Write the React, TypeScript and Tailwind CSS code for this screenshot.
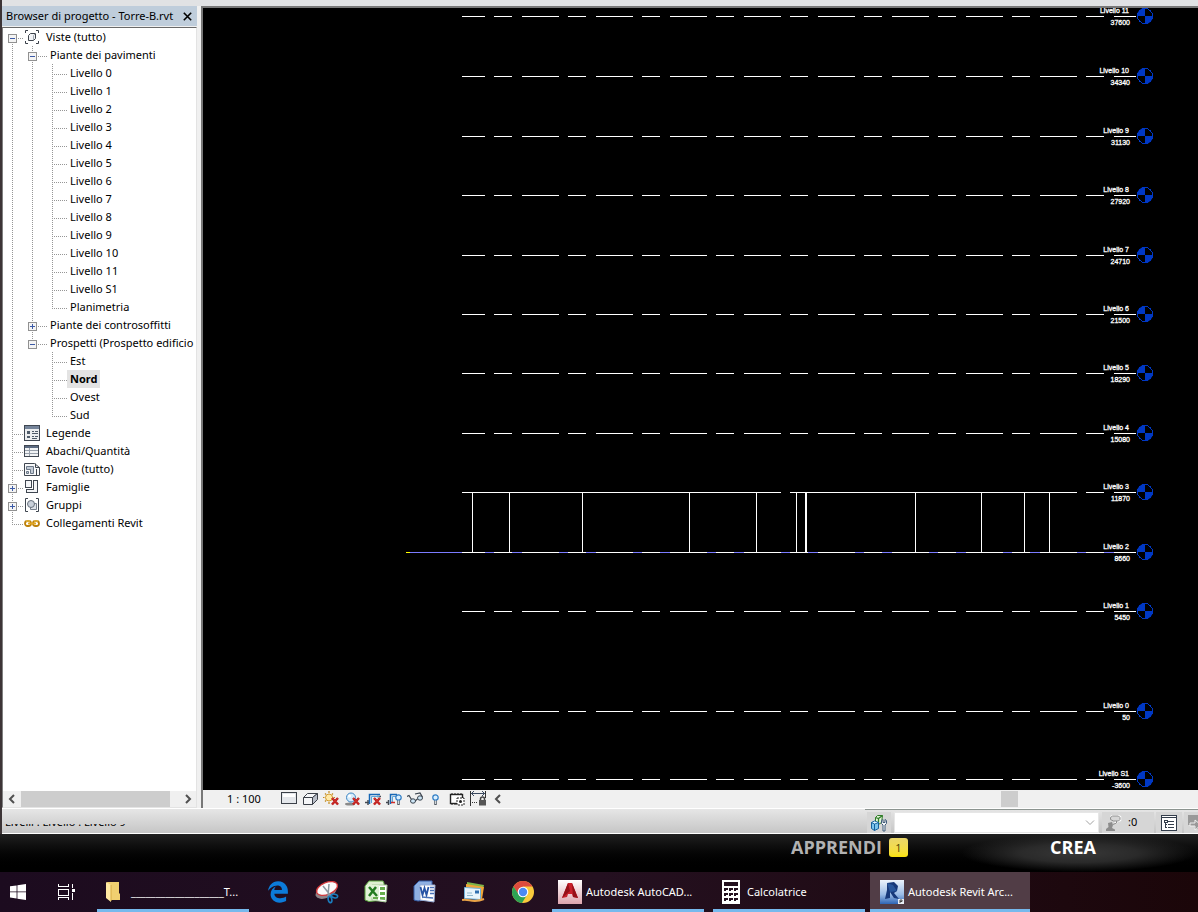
import type { ReactNode } from "react";
import { FaEdgeLegacy } from "react-icons/fa";

type GuideKind = "blank" | "line" | "tee" | "end" | "first" | "open" | "closed";

type TreeRowData = {
  label: string;
  guides: GuideKind[];
  icon?: ReactNode;
  selected?: boolean;
};

const leaf = (label: string, guides: GuideKind[], selected = false): TreeRowData => ({
  label,
  guides,
  selected,
});

const ROWS: TreeRowData[] = [
  { label: "Viste (tutto)", guides: ["first"], icon: <ViewsIcon /> },
  { label: "Piante dei pavimenti", guides: ["line", "open"] },
  leaf("Livello 0", ["line", "line", "tee"]),
  leaf("Livello 1", ["line", "line", "tee"]),
  leaf("Livello 2", ["line", "line", "tee"]),
  leaf("Livello 3", ["line", "line", "tee"]),
  leaf("Livello 4", ["line", "line", "tee"]),
  leaf("Livello 5", ["line", "line", "tee"]),
  leaf("Livello 6", ["line", "line", "tee"]),
  leaf("Livello 7", ["line", "line", "tee"]),
  leaf("Livello 8", ["line", "line", "tee"]),
  leaf("Livello 9", ["line", "line", "tee"]),
  leaf("Livello 10", ["line", "line", "tee"]),
  leaf("Livello 11", ["line", "line", "tee"]),
  leaf("Livello S1", ["line", "line", "tee"]),
  leaf("Planimetria", ["line", "line", "end"]),
  { label: "Piante dei controsoffitti", guides: ["line", "closed"] },
  { label: "Prospetti (Prospetto edificio", guides: ["line", "first"] },
  leaf("Est", ["line", "blank", "tee"]),
  leaf("Nord", ["line", "blank", "tee"], true),
  leaf("Ovest", ["line", "blank", "tee"]),
  leaf("Sud", ["line", "blank", "end"]),
  { label: "Legende", guides: ["tee"], icon: <LegendIcon /> },
  { label: "Abachi/Quantità", guides: ["tee"], icon: <ScheduleIcon /> },
  { label: "Tavole (tutto)", guides: ["tee"], icon: <SheetIcon /> },
  { label: "Famiglie", guides: ["closed"], icon: <FamilyIcon /> },
  { label: "Gruppi", guides: ["closed"], icon: <GroupIcon /> },
  { label: "Collegamenti Revit", guides: ["end"], icon: <LinkIcon /> },
];

const LEVELS = [
  { name: "Livello 11", value: "37600", y: 8 },
  { name: "Livello 10", value: "34340", y: 68 },
  { name: "Livello 9", value: "31130", y: 128 },
  { name: "Livello 8", value: "27920", y: 187 },
  { name: "Livello 7", value: "24710", y: 247 },
  { name: "Livello 6", value: "21500", y: 306 },
  { name: "Livello 5", value: "18290", y: 365 },
  { name: "Livello 4", value: "15080", y: 425 },
  { name: "Livello 3", value: "11870", y: 484 },
  { name: "Livello 2", value: "8660", y: 544 },
  { name: "Livello 1", value: "5450", y: 603 },
  { name: "Livello 0", value: "50", y: 703 },
  { name: "Livello S1", value: "-3600", y: 771 },
];

const WALLS = [269, 306, 379, 486, 553, 593, 712, 778, 821, 846];

export default function App() {
  return (
    <div className="w-full overflow-hidden bg-black font-['Noto_Sans','Open_Sans',sans-serif] text-[11px] text-black">
      <div className="border-l-2 border-[#3c3436] bg-[#f0f0f0]">
        <div className="h-1.5 bg-[#e1e2e4]" />
        <div className="flex">
          <ProjectBrowser />
          <main className="ml-1 flex min-w-0 flex-1 flex-col">
            <LevelCanvas />
            <ViewControlBar />
          </main>
        </div>
        <StatusBar />
      </div>
      <Banner />
      <Taskbar />
    </div>
  );
}

function ProjectBrowser() {
  return (
    <aside className="flex w-[195px] shrink-0 flex-col">
      <header className="flex h-5 items-center justify-between bg-[#bfcddb] pl-1">
        <h2 className="whitespace-nowrap">Browser di progetto - Torre-B.rvt</h2>
        <button aria-label="Chiudi" className="flex h-5 w-5 items-center justify-center">
          <svg width="9" height="9" viewBox="0 0 9 9" stroke="#000" strokeWidth="1.6">
            <path d="M.8.8l7.4 7.4M8.2.8L.8 8.2" />
          </svg>
        </button>
      </header>
      <div className="mt-px flex flex-1 flex-col border border-[#e3e3e3] border-t-[#696969] border-l-[#808080] bg-white">
        <ul className="flex-1 overflow-hidden pl-px">
          {ROWS.map((row) => (
            <TreeRow key={row.label} row={row} />
          ))}
        </ul>
        <div className="flex h-4 bg-[#f0f0f0]">
          <button aria-label="Scorri a sinistra" className="flex w-[18px] items-center justify-center">
            <Chevron d="M6 1L2 5l4 4" />
          </button>
          <div className="w-[149px] bg-[#cdcdcd]" />
          <button aria-label="Scorri a destra" className="ml-auto flex w-[17px] items-center justify-center">
            <Chevron d="M2 1l4 4-4 4" />
          </button>
        </div>
      </div>
    </aside>
  );
}

function Chevron({ d }: { d: string }) {
  return (
    <svg width="8" height="10" viewBox="0 0 8 10" fill="none" stroke="#505050" strokeWidth="2">
      <path d={d} />
    </svg>
  );
}

function TreeRow({ row }: { row: TreeRowData }) {
  return (
    <li className="flex h-[18px] items-center whitespace-nowrap">
      {row.guides.map((kind, i) => (
        <Guide key={i} kind={kind} column={i} label={row.label} />
      ))}
      {row.icon && <span className="ml-0.5 h-4 w-4 shrink-0">{row.icon}</span>}
      {row.selected ? (
        <span className="ml-[5px] h-[18px] bg-[#e3e3e3] px-[3px] leading-[18px] font-bold">{row.label}</span>
      ) : (
        <span className={row.icon ? "pl-1.5 leading-[18px]" : "pl-2 leading-[18px]"}>{row.label}</span>
      )}
    </li>
  );
}

function Guide({ kind, column, label }: { kind: GuideKind; column: number; label: string }) {
  const isToggle = kind === "first" || kind === "open" || kind === "closed";
  const reach = column === 0 ? 22 : 25;
  // "first" opens a branch whose own line ends or starts at the box
  const top = kind === "first" && column === 0 ? 10 : 0;
  const bottom = kind === "end" || (kind === "first" && column > 0) ? 11 : 18;

  const drawing = (
    <svg
      width={column === 0 ? 18 : 20}
      height="18"
      viewBox={column === 0 ? "2 0 18 18" : "0 0 20 18"}
      className="block overflow-visible"
      shapeRendering="crispEdges"
      fill="none"
    >
      {kind !== "blank" && <path d={`M10.5 ${top}V${bottom}`} stroke="#969696" strokeDasharray="1 1" />}
      {kind !== "blank" && kind !== "line" && (
        <path d={`M12 10.5H${reach}`} stroke="#969696" strokeDasharray="1 1" />
      )}
      {isToggle && (
        <>
          <rect x="6.5" y="6.5" width="8" height="8" fill="#f4f4f4" stroke="#919191" />
          <path d="M8 10.5h5" stroke="#3c5aa6" />
          {kind === "closed" && <path d="M10.5 8v5" stroke="#3c5aa6" />}
        </>
      )}
    </svg>
  );

  if (isToggle) {
    return (
      <button aria-label={label} aria-expanded={kind !== "closed"} className="shrink-0">
        {drawing}
      </button>
    );
  }
  return <span className="shrink-0">{drawing}</span>;
}

function LevelCanvas() {
  return (
    <div className="border-t-2 border-l-2 border-t-[#787878] border-l-[#787878] bg-black">
      <svg
        className="block h-[782px] w-full font-['Liberation_Sans',Arial,sans-serif] text-[7px]"
        fill="#fff"
      >
        <g shapeRendering="crispEdges">
          <path d="M207 544.5H911" stroke="#7b7bff" />
          <path d="M203 544.5h4" stroke="#ff0" />
          {LEVELS.map((level) => (
            <path
              key={level.name}
              d={`M259 ${level.y + 0.5}H933`}
              stroke="#fff"
              strokeDasharray="37 9 18 10"
              strokeDashoffset="14"
            />
          ))}
          <path d="M259 484.5H578M587 484.5H874" stroke="#fff" />
          {WALLS.map((x) => (
            <path key={x} d={`M${x + 0.5} 484V544`} stroke="#fff" />
          ))}
          <path d="M603 484V544" stroke="#fff" strokeWidth="2" />
        </g>
        {LEVELS.map((level) => (
          <g key={level.name}>
            <text x="926" y={level.y - 3} textAnchor="end" stroke="#fff" strokeWidth=".3">
              {level.name}
            </text>
            <text x="927" y={level.y + 9} textAnchor="end" stroke="#fff" strokeWidth=".3">
              {level.value}
            </text>
            <g transform={`translate(942 ${level.y})`}>
              <circle r="7.5" fill="none" stroke="#0038c4" shapeRendering="crispEdges" />
              <path d="M0 0V-8A8 8 0 0 0-8 0ZM0 0V8A8 8 0 0 0 8 0Z" fill="#0038c4" />
            </g>
          </g>
        ))}
      </svg>
    </div>
  );
}

function ViewControlBar() {
  return (
    <div className="flex h-[18px] items-center border-l-2 border-[#787878] bg-[#f0f0f0]">
      <button className="ml-6 w-[51px] text-left whitespace-nowrap">1 : 100</button>
      <div className="ml-[3px] flex items-center gap-[5px]">
        <ToolButton label="Livello di dettaglio">
          <rect x=".5" y="1.5" width="15" height="11" fill="#e4e7eb" stroke="#3b4048" />
          <path d="M2 3h12v3H2z" fill="#fff" />
        </ToolButton>
        <ToolButton label="Stile di visualizzazione">
          <path d="M1.500 6.500h9v7h-9zM1.500 6.500l4-4h10l-5 4" fill="#f5f6f8" stroke="#3b4048" strokeLinejoin="round" />
          <path d="M10.500 6.500l5-4v6l-5 5z" fill="#b9bec8" stroke="#3b4048" strokeLinejoin="round" />
        </ToolButton>
        <ToolButton label="Percorso del sole">
          <path d="M6 0v2M6 11v2M0 6.500h1.500M2 2.500l1 1M10 2.500l-1 1M2 10.500l1-1M10.500 6.500H12" stroke="#c28a1e" strokeWidth="1.200" />
          <circle cx="6" cy="6.500" r="3.500" fill="#ffe9a8" stroke="#d19a2c" />
          <RedCross />
        </ToolButton>
        <ToolButton label="Ombre">
          <ellipse cx="6" cy="13" rx="5" ry="1.500" fill="#8a8a8a" />
          <circle cx="7" cy="6.500" r="4.500" fill="#d6ecfb" stroke="#3f86c4" />
          <circle cx="5.500" cy="5" r="1.500" fill="#fff" />
          <RedCross />
        </ToolButton>
        <ToolButton label="Ritaglia vista">
          <path d="M0 11.500h4M12 5.500h4M3 9v5" stroke="#454a52" strokeWidth="1.500" />
          <path d="M4.500 13V3.500H15" stroke="#1767b5" strokeWidth="1.500" />
          <path d="M6.500 12V5.500h8" stroke="#5ea7dc" />
          <RedCross />
        </ToolButton>
        <ToolButton label="Mostra area di ritaglio">
          <path d="M0 11.500h3M2.500 9v5" stroke="#454a52" strokeWidth="1.500" />
          <path d="M4.500 13V3.500H11" stroke="#1767b5" strokeWidth="1.500" />
          <path d="M6.500 12V5.500H10" stroke="#5ea7dc" />
          <path d="M5 11.500h4" stroke="#d32c28" strokeWidth="1.500" />
          <Bulb x={9} />
        </ToolButton>
        <ToolButton label="Nascondi/isola temporaneamente">
          <path d="M0 5.500l2-1 2.500 4M8 3l5-1 2.500 4M8 10l2.500-2" stroke="#39424d" strokeWidth="1.200" />
          <ellipse cx="6" cy="10" rx="2.500" ry="2.200" fill="#cde6f6" stroke="#39424d" />
          <ellipse cx="13" cy="7" rx="2.500" ry="2.200" fill="#cde6f6" stroke="#39424d" />
        </ToolButton>
        <ToolButton label="Mostra elementi nascosti">
          <Bulb x={4} />
        </ToolButton>
        <ToolButton label="Proprietà vista temporanea">
          <rect x="1.500" y="3.500" width="12" height="9" fill="#fff" stroke="#222" strokeWidth="1.400" />
          <path d="M3 2v2M6 2v2M9 2v2M12 2v2M3 12v2M6 12v2" stroke="#222" />
          <rect x="8" y="7" width="7" height="7" fill="#fff" stroke="#222" strokeDasharray="2 1" />
          <circle cx="11.500" cy="10.500" r="1.500" fill="#222" />
        </ToolButton>
        <ToolButton label="Mostra vincoli">
          <path d="M.5 0v15M15.500 0v7" stroke="#333" />
          <path d="M1 2.500h14M4 0L1.500 2.500 4 5M12 0l2.500 2.500L12 5" stroke="#3b4a60" />
          <path d="M2 11.500h6" stroke="#333" strokeDasharray="1 1" />
          <path d="M10.500 9V8a2 2 0 0 1 4 0v1" stroke="#444" strokeWidth="1.500" />
          <rect x="9" y="9" width="7" height="5.500" fill="#555" />
        </ToolButton>
      </div>
      <button aria-label="Scorri a sinistra" className="ml-1 flex w-4 justify-center">
        <Chevron d="M6 1L2 5l4 4" />
      </button>
      <div className="mr-[180px] ml-auto h-4 w-[17px] bg-[#cdcdcd]" />
    </div>
  );
}

function ToolButton({ label, children }: { label: string; children: ReactNode }) {
  return (
    <button aria-label={label} className="h-4 w-4">
      <svg width="16" height="16" viewBox="0 0 16 16" fill="none">
        {children}
      </svg>
    </button>
  );
}

function RedCross() {
  return (
    <g>
      <path d="M9 7l6 6.500M15 7l-6 6.500" stroke="#b81616" strokeWidth="2.400" />
      <path d="M9 7l6 6.500M15 7l-6 6.500" stroke="#e2483f" strokeWidth=".6" />
    </g>
  );
}

function Bulb({ x }: { x: number }) {
  return (
    <g transform={`translate(${x} 0)`}>
      <path d="M3.500 9v5" stroke="#555c66" strokeWidth="2.500" />
      <circle cx="3.500" cy="6.500" r="2.700" fill="#d9efff" stroke="#2f7cc4" strokeWidth="1.200" />
      <path d="M3.500 9.500v3.500" stroke="#cfd6de" />
    </g>
  );
}

function StatusBar() {
  return (
    <footer className="flex h-[26px] border-y border-white bg-linear-to-b from-[#e6e6e6] to-[#c6c6c6]">
      <div className="mt-[15px] ml-[3px] flex h-[2px] items-end overflow-hidden leading-[8px]">
        <p className="whitespace-nowrap">Livelli : Livello : Livello 9</p>
      </div>
      <div className="ml-auto flex border-t border-[#8c9490] pt-0.5">
        <button aria-label="Workset" className="ml-[2px] flex w-6 items-center justify-center bg-[#d6d6d6]">
          <svg width="18" height="18" viewBox="0 0 18 18" fill="none">
            <path d="M5.500 3.500l2-2h5l-1 7-3 2-3-2z" fill="#e3f3da" stroke="#2f7d28" />
            <path d="M5.500 3.500l3 1 4-3M8.500 4.500v4" stroke="#2f7d28" strokeWidth="1.300" />
            <path d="M1.500 8.500l3-1.500 4 1.500v6l-4 2-3-2z" fill="#7cc4ec" stroke="#155f9c" />
            <path d="M1.500 8.500l3 1.500 4-1.500M4.500 10v6.500" stroke="#155f9c" />
            <path d="M2.500 8.500l2 1 3-1-3-1z" fill="#e4f5ff" />
            <path d="M11.500 6.500v3l1.500 1.500v6h2v-6l1.500-1.500v-3l-1.500-1v3h-2v-3z" fill="#f4f6f8" stroke="#405c7a" />
          </svg>
        </button>
        <select
          aria-label="Workset attivo"
          className="ml-[3px] w-[205px] appearance-none border border-[#e6e6e6] bg-white"
        />
        <svg className="pointer-events-none -ml-3.5 self-center" width="10" height="6" viewBox="0 0 10 6" fill="none" stroke="#a0a0a0">
          <path d="M1 .5l4 4 4-4" />
        </svg>
        <button className="ml-[7px] flex w-[52px] items-center gap-1.5 bg-[#d6d6d6] pl-1">
          <svg width="16" height="16" viewBox="0 0 16 16" fill="none">
            <path d="M5 2c2-1.500 7-1.500 9 0v3l-3 1-2 2" stroke="#fff" strokeWidth="2.500" />
            <path d="M4.500 2.500l2-1.500h6l1.500 1.500v2L12.500 6h-5l-3-1.500z" fill="#d6d6d6" stroke="#8f8f8f" />
            <path d="M10.500 6v2L7 9.500" stroke="#8f8f8f" />
            <path d="M0 16v-2l2.500-2L2 8l4-1 1 3-1 3 3 1.500V16z" fill="#8c8c8c" />
          </svg>
          :0
        </button>
        <button aria-label="Opzioni di selezione" className="ml-0.5 flex w-[26px] items-center justify-center bg-[#d6d6d6]">
          <svg width="16" height="16" viewBox="0 0 16 16" shapeRendering="crispEdges">
            <rect x=".5" y=".5" width="15" height="15" fill="#fff" stroke="#333d4b" />
            <path d="M1 2.500h14" stroke="#333d4b" />
            <path d="M3 5.500h3v2H3zM7 6.500h6M7 9.500h6M7 12.500h6M4.500 8v5M4 9.500h2M4 12.500h2" fill="none" stroke="#333d4b" />
          </svg>
        </button>
        <button aria-label="Selezione collegamenti" className="ml-0.5 w-3.5 overflow-hidden bg-[#d6d6d6] pl-[3px]">
          <svg width="18" height="18" viewBox="0 0 18 18" fill="#999">
            <path d="M1 1h12v14H8l-1-4H1z" />
            <path d="M3 9h5V6l6 5-6 5v-4H3z" fill="#999" stroke="#eee" />
          </svg>
        </button>
      </div>
    </footer>
  );
}

function Banner() {
  return (
    <nav className="flex h-[38px] items-start justify-end bg-linear-to-b from-[#202020] to-black font-['Open_Sans',sans-serif] text-lg leading-[27px] font-bold">
      <a href="#apprendi" className="text-[#b2b2b2]">
        APPRENDI
      </a>
      <span className="mt-1 ml-[7px] h-[19px] w-[19px] rounded-[3px] bg-linear-to-b from-[#ead66a] to-[#fbe300] text-center text-[11px] leading-[19px] font-normal text-[#4c4300]">
        1
      </span>
      <div className="ml-[52px] flex h-full w-[238px] justify-center bg-[radial-gradient(ellipse_at_center,#383838_0%,#2a2a2a_35%,transparent_70%)]">
        <a href="#crea" className="pr-[12px] text-white">
          CREA
        </a>
      </div>
    </nav>
  );
}

function Taskbar() {
  return (
    <footer className="flex h-10 items-stretch bg-linear-to-r from-[#1c0b1f] via-[#241020] to-[#1b0609] text-white">
      <TaskIcon label="Start" className="w-9">
        <svg width="16" height="16" viewBox="0 0 16 16" fill="#fff">
          <path d="M0 2.300L6.600 1.400V7.500H0zM7.400 1.300L16 0v7.500H7.400zM0 8.300h6.600v6.200L0 13.600zM7.400 8.300H16V16l-8.600-1.300z" />
        </svg>
      </TaskIcon>
      <TaskIcon label="Visualizzazione attività" className="ml-3 w-9">
        <svg width="17" height="16" viewBox="0 0 17 16" fill="none" stroke="#fff" shapeRendering="crispEdges">
          <path d="M.5 0v2.500h10V0M.5 5.500h10v6H.5zM.5 16v-2.500h10V16M14.500 0v16" />
          <path d="M13 4h4v4h-4z" fill="#fff" stroke="#1c0b1f" />
        </svg>
      </TaskIcon>
      <TaskButton className="ml-[13px] w-[152px] pl-[9px]" label={"_".repeat(19) + "T..."}>
        <svg width="20" height="22" viewBox="0 0 20 22" className="mr-[5px]">
          <path d="M1 1h12v11l1 1v6H3z" fill="#f0cf70" />
          <path d="M0 1l5 3v17l-5-4z" fill="#ffe9a2" />
          <path d="M5 4v16" stroke="#d5aa43" />
        </svg>
      </TaskButton>
      <div className="ml-1 flex">
        <TaskIcon label="Edge" className="w-[49px]">
          <FaEdgeLegacy size={22} color="#0c7bd9" />
        </TaskIcon>
        <TaskIcon label="Strumento di cattura" className="w-[49px]">
          <svg width="24" height="24" viewBox="0 0 24 24" fill="none">
            <ellipse cx="11" cy="12" rx="11" ry="6" transform="rotate(-22 11 12)" fill="#8d8388" />
            <ellipse cx="12" cy="8.500" rx="11" ry="6" transform="rotate(-22 12 8.500)" fill="#fbfbfb" stroke="#d2383b" strokeWidth="1.300" />
            <path d="M8 6l8 10M14 4l-1 12" stroke="#8d979f" strokeWidth="1.500" />
            <ellipse cx="15" cy="19.500" rx="1.800" ry="3.200" transform="rotate(-12 15 19.500)" stroke="#1a7dbe" strokeWidth="1.600" />
            <ellipse cx="19.500" cy="16" rx="3.200" ry="1.800" transform="rotate(12 19.500 16)" stroke="#1a7dbe" strokeWidth="1.600" />
          </svg>
        </TaskIcon>
        <TaskIcon label="Excel" className="w-[49px]">
          <svg width="24" height="24" viewBox="0 0 24 24" fill="none">
            <path d="M1 6l4-5h14l1 2v17L5 21.500 1 20z" fill="#dff0d2" stroke="#5ba53f" />
            <path d="M8 5h15l-1 17-14-2z" fill="#fff" stroke="#a9cc9a" />
            <path d="M2 5h13v13l-13-1z" fill="#e2f3d8" />
            <path d="M5 7l8 9M12 7l-7 9" stroke="#237b20" strokeWidth="2.500" />
            <path d="M16 7h5v3h-5zM16 12h5v3h-5zM16 17h5v3l-5-.5zM9 17h5v2.500L9 19z" fill="#66ad4c" />
          </svg>
        </TaskIcon>
        <TaskIcon label="Word" className="w-[49px]">
          <svg width="24" height="24" viewBox="0 0 24 24" fill="none">
            <path d="M1 6l5-5h13v18L5 21l-4-1z" fill="#8fb0e2" stroke="#365fa7" />
            <path d="M7 5h15l-1 17-14-2z" fill="#fff" stroke="#95aad2" />
            <path d="M7.500 7l2 8 2-7 2 7 2-8" stroke="#2854a5" strokeWidth="1.800" />
            <path d="M17 7.500h4M17 10.500h4M17 13.500h4M9 17l11 1" stroke="#4a72b7" strokeWidth="1.300" />
          </svg>
        </TaskIcon>
        <TaskIcon label="Raccolta foto" className="w-[49px]">
          <svg width="24" height="24" viewBox="0 0 24 24" fill="none">
            <path d="M5 2l17 3-3 13-14-3z" fill="#7db54a" />
            <path d="M4 4l18 3-2 12-16-2z" fill="#f0a638" />
            <path d="M2.500 7.500l16 1v11l-16-1z" fill="#e8f5fc" stroke="#6eb1d8" />
            <path d="M5 13h5M5 15.500h6" stroke="#8fb9cf" />
            <path d="M13 10.500h4v3h-4z" fill="#2f6fb0" />
            <path d="M0 20c7-2 10 4 22-1" stroke="#eaa347" strokeWidth="2" />
          </svg>
        </TaskIcon>
        <TaskIcon label="Chrome" className="w-[49px]">
          <svg width="22" height="22" viewBox="0 0 22 22">
            <circle cx="11" cy="11" r="11" fill="#f9ca3c" />
            <path d="M1.500 5.500A11 11 0 0 1 20.500 5.500H11l-4.500 8z" fill="#dd4b3e" />
            <path d="M1.500 5.500A11 11 0 0 0 10 22l5.500-9L11 11l-4.500 2z" fill="#2da254" />
            <circle cx="11" cy="11" r="5.300" fill="#fff" />
            <circle cx="11" cy="11" r="4.200" fill="#4a8af4" />
          </svg>
        </TaskIcon>
      </div>
      <TaskButton className="ml-[5px] w-[152px] gap-1 pl-1.5" label="Autodesk AutoCAD...">
        <svg width="24" height="24" viewBox="0 0 24 24">
          <defs>
            <linearGradient id="cad" x2="0" y2="1">
              <stop stopColor="#fff" />
              <stop offset="1" stopColor="#dda5ae" />
            </linearGradient>
          </defs>
          <path d="M0 0h24v24H0z" fill="url(#cad)" />
          <path d="M10 3h4l6 15-5-1-1-3h-4l-1 3-5 1z" fill="#c8202b" />
          <path d="M10 3l2 8-8 7zM14 3l1 14 5 1z" fill="#961018" />
        </svg>
      </TaskButton>
      <TaskButton className="ml-[9px] w-[152px] gap-[7px] pl-[9px]" label="Calcolatrice">
        <svg width="18" height="24" viewBox="0 0 18 24" shapeRendering="crispEdges">
          <path d="M0 0h18v24H0z" fill="#fff" />
          <path d="M2 2h14v4H2zM2 8h4v3H2zM7 8h4v3H7zM12 8h4v3h-4zM2 13h4v3H2zM7 13h4v3H7zM12 13h4v3h-4zM2 18h4v3H2zM7 18h4v3H7zM12 18h4v3h-4z" fill="#24101f" />
          <path d="M4 10h2v1H4zM9 10h2v1H9zM14 10h2v1h-2zM4 15h2v1H4zM9 15h2v1H9zM14 15h2v1h-2zM4 20h2v1H4zM9 20h2v1H9zM14 20h2v1h-2z" fill="#fff" />
        </svg>
      </TaskButton>
      <TaskButton className="ml-[5px] w-40 gap-1 bg-[#513d46] pl-2.5" label="Autodesk Revit Arc...">
        <svg width="24" height="24" viewBox="0 0 24 24">
          <defs>
            <linearGradient id="revit" x2="0" y2="1">
              <stop stopColor="#edf4fc" />
              <stop offset=".6" stopColor="#9bbce6" />
              <stop offset="1" stopColor="#2e65b4" />
            </linearGradient>
          </defs>
          <path d="M0 0h24v24H0z" fill="url(#revit)" />
          <path d="M7 3l7-1 4 4-1 5-3 2 5 6-5-1-4-6v6l-5 1 2-9z" fill="#17397a" />
          <path d="M7 3l6 2 4 6-7 1z" fill="#28569b" />
          <path d="M18 19h6v5h-6z" fill="#e7edf5" />
          <path d="M20 23v-3h2v1.500h-2" fill="none" stroke="#444" />
        </svg>
      </TaskButton>
    </footer>
  );
}

function TaskIcon({ label, className, children }: { label: string; className: string; children: ReactNode }) {
  return (
    <button aria-label={label} className={`flex shrink-0 items-center justify-center ${className}`}>
      {children}
    </button>
  );
}

function TaskButton({ label, className, children }: { label: string; className: string; children: ReactNode }) {
  return (
    <button className={`flex shrink-0 items-center border-b-[3px] border-[#76b9ed] pt-[3px] whitespace-nowrap ${className}`}>
      {children}
      <span>{label}</span>
    </button>
  );
}

function ViewsIcon() {
  return (
    <svg width="16" height="16" viewBox="0 0 16 16" fill="none" stroke="#3c424b">
      <path d="M4 1.500H1.500V4M12 1.500h2.500V4M1.500 12v2.500H4M14.500 12v2.500H12" />
      <path d="M4.500 6.500l2-2h5v5l-2 2h-5z" fill="#f1f3f6" />
      <path d="M9.500 11V6.500l2-2" stroke="#a3a9b2" />
    </svg>
  );
}

function LegendIcon() {
  return (
    <svg width="16" height="16" viewBox="0 0 16 16" shapeRendering="crispEdges">
      <rect x=".5" y=".5" width="15" height="15" fill="#eceef0" stroke="#404752" />
      <path d="M1 1h14v3H1z" fill="#75849a" />
      <path d="M3 6h3v3H3zM3 11h3v2H3z" fill="#4f5b69" />
      <path d="M8 6.500h2M11 6.500h3M8 8.500h6M8 11.500h2M11 11.500h3M8 13.500h5" stroke="#4f5b69" />
    </svg>
  );
}

function ScheduleIcon() {
  return (
    <svg width="16" height="16" viewBox="0 0 16 16" shapeRendering="crispEdges">
      <rect x=".5" y="2.500" width="14" height="11" fill="#f1f3f5" stroke="#404752" />
      <path d="M1 3h13v2H1z" fill="#5c6b82" />
      <path d="M1 7.500h13M1 10.500h13M5.500 5v8" stroke="#98a0ab" />
    </svg>
  );
}

function SheetIcon() {
  return (
    <svg width="16" height="16" viewBox="0 0 16 16" fill="none" stroke="#3f4650">
      <path d="M.5 2.500h10l5 4v8H.5z" fill="#f8f9fa" />
      <path d="M11.500 2.500v4h4M12.500 8v6" />
      <path d="M2.500 5.500h7v7h-3v-4h-4zM2.500 10.500h2v2h-2z" fill="#c3cbd6" stroke="#6c7989" />
    </svg>
  );
}

function FamilyIcon() {
  return (
    <svg width="16" height="16" viewBox="0 0 16 16" fill="#f4f5f7" stroke="#3f4650" shapeRendering="crispEdges">
      <path d="M1.500 1.500h6v7h-6z" />
      <path d="M9.500 1.500h4v12h-11v-3h7z" />
    </svg>
  );
}

function GroupIcon() {
  return (
    <svg width="16" height="16" viewBox="0 0 16 16" fill="none" stroke="#3f4650">
      <path d="M4 1.500H1.500v13H4M12 1.500h2.500v13H12" />
      <path d="M6.500 6.500h6v6h-6z" fill="#dfe3e9" stroke="#78818d" />
      <circle cx="7" cy="7" r="3.500" fill="#c9d0da" stroke="#68727e" />
    </svg>
  );
}

function LinkIcon() {
  return (
    <svg width="16" height="16" viewBox="0 0 16 16" fill="none">
      <rect x="1" y="6" width="6" height="5" rx="2.500" stroke="#bd810b" strokeWidth="1.800" />
      <rect x="9" y="6" width="6" height="5" rx="2.500" stroke="#bd810b" strokeWidth="1.800" />
      <path d="M4 8.500h8" stroke="#e2a722" strokeWidth="1.800" />
      <path d="M2 6h4M10 6h4" stroke="#f7cf58" />
    </svg>
  );
}
